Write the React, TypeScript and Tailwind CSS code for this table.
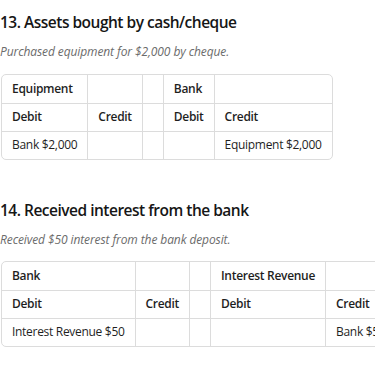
import React from "react";

type Entry = {
  title: string;
  note: string;
  left: string;
  right: string;
  leftDebit: string;
  rightCredit: string;
};

const entries: Entry[] = [
  {
    title: "13. Assets bought by cash/cheque",
    note: "Purchased equipment for $2,000 by cheque.",
    left: "Equipment",
    right: "Bank",
    leftDebit: "Bank $2,000",
    rightCredit: "Equipment $2,000",
  },
  {
    title: "14. Received interest from the bank",
    note: "Received $50 interest from the bank deposit.",
    left: "Bank",
    right: "Interest Revenue",
    leftDebit: "Interest Revenue $50",
    rightCredit: "Bank $50",
  },
];

const cell = "px-[10px] h-[28px] whitespace-nowrap text-left border-[#dcdcdc]";

function TAccounts({ e }: { e: Entry }) {
  return (
    <div className="w-max border border-[#dcdcdc] rounded-[5px] overflow-hidden">
      <table className="border-collapse text-[12px] tracking-[-0.3px] text-[#1f1f1f]">
        <tbody>
          <tr className="border-b border-[#dcdcdc]">
            <th className={`${cell} font-semibold border-r`}>{e.left}</th>
            <th className={`${cell} border-r`}></th>
            <th className={`${cell} border-r`}></th>
            <th className={`${cell} font-semibold border-r`}>{e.right}</th>
            <th className={cell}></th>
          </tr>
          <tr className="border-b border-[#dcdcdc]">
            <th className={`${cell} font-semibold border-r`}>Debit</th>
            <th className={`${cell} font-semibold border-r`}>Credit</th>
            <th className={`${cell} border-r`}></th>
            <th className={`${cell} font-semibold border-r`}>Debit</th>
            <th className={`${cell} font-semibold`}>Credit</th>
          </tr>
          <tr>
            <td className={`${cell} border-r`}>{e.leftDebit}</td>
            <td className={`${cell} border-r`}></td>
            <td className={`${cell} border-r`}></td>
            <td className={`${cell} border-r`}></td>
            <td className={cell}>{e.rightCredit}</td>
          </tr>
        </tbody>
      </table>
    </div>
  );
}

export default function App() {
  return (
    <div className="bg-white min-h-[366px] pt-[10px] overflow-hidden" style={{ fontFamily: '"Open Sans", "Noto Sans", sans-serif' }}>
      {entries.map((e, i) => (
        <section key={i} className={i > 0 ? "mt-[38px]" : ""}>
          <h2 className="text-[15.5px] leading-[24px] tracking-[-0.5px] font-semibold text-[#161616]">{e.title}</h2>
          <p className="mt-[9px] text-[12px] leading-[18px] tracking-[-0.1px] italic text-[#6b6b6b]">{e.note}</p>
          <div className={i > 0 ? "mt-[12px] pl-px" : "mt-[13px] pl-px"}>
            <TAccounts e={e} />
          </div>
        </section>
      ))}
    </div>
  );
}
